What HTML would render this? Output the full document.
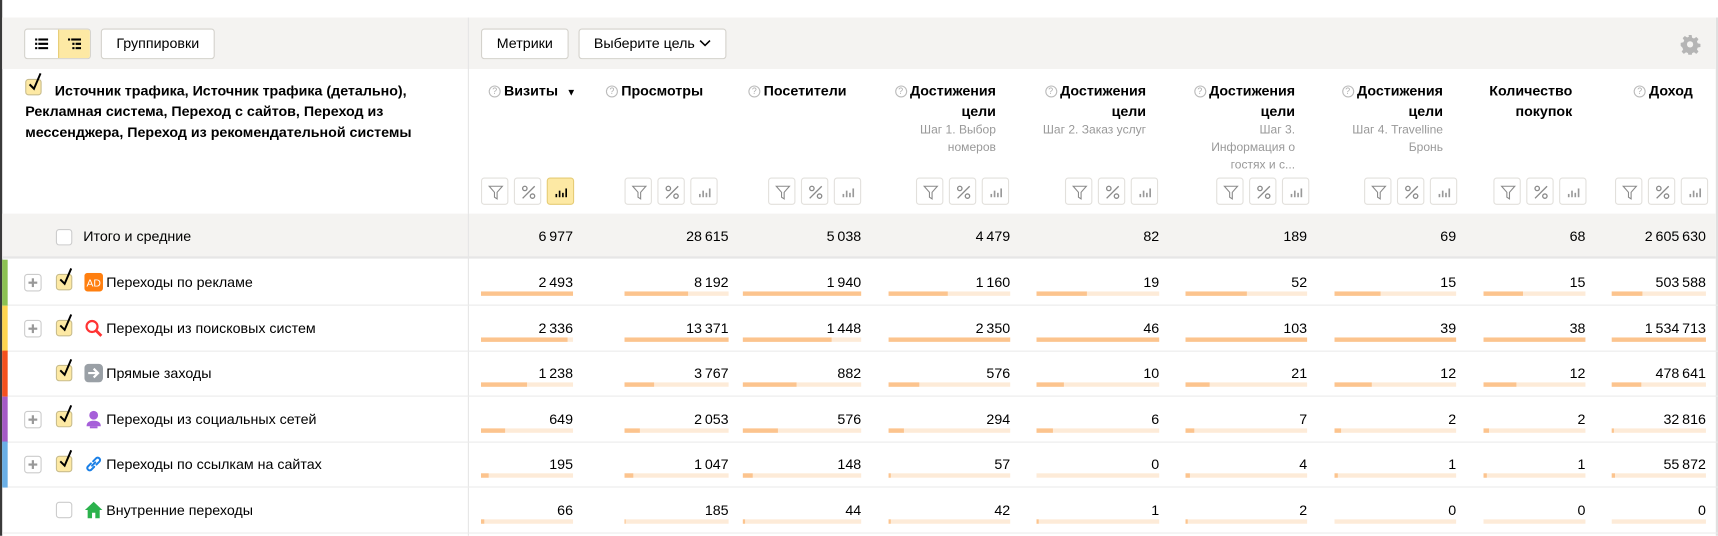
<!DOCTYPE html>
<html><head><meta charset="utf-8"><style>
*{box-sizing:border-box;margin:0;padding:0}
html,body{width:1718px;height:536px;overflow:hidden;background:#fff}
#w{position:absolute;left:0;top:0;width:1568px;height:489px;transform:scale(1.09566);transform-origin:0 0;font-family:"Liberation Sans",sans-serif;color:#000;font-size:13px}
.a{position:absolute}
.btn{position:absolute;top:26px;height:28px;border:1px solid #d4d2cc;border-radius:3px;background:#fff;font-size:13px;line-height:26px;text-align:center}
.hd{position:absolute;top:73px;font-weight:bold;font-size:13px;line-height:19px;text-align:right;white-space:nowrap}
.hd .q{display:inline-block;width:11px;height:11px;border:1px solid #bbb;border-radius:50%;font-size:8px;line-height:9px;color:#aaa;text-align:center;font-weight:normal;vertical-align:1px;margin-right:3px}
.sub{display:block;font-weight:normal;font-size:11px;color:#999;line-height:16px}
.ib{position:absolute;top:162px;width:25px;height:25px;border:1px solid #e2e0dc;border-radius:3px;background:#fff}
.ib svg{position:absolute;left:5px;top:5px}
.ib.on{background:#fde9a4;border-color:#e6cc75}
.row{position:absolute;left:2px;width:1566px;border-bottom:1px solid #ebebeb;height:42px}
.c{position:absolute;top:0;height:41px}
.v{position:absolute;right:0;top:13px;font-size:13px;white-space:nowrap}
.b{position:absolute;left:0;right:0;top:29px;height:4px;background:#fdebd8}
.b i{display:block;height:4px;background:#fcc48e}
.st{position:absolute;left:0;top:0;width:5px;height:42px}
.pl{position:absolute;left:20px;top:13px;width:16px;height:16px;border:1px solid #ccc;border-radius:3px;background:#fff}
.pl:before{content:"";position:absolute;left:3px;top:6px;width:8px;height:2px;background:#999}
.pl:after{content:"";position:absolute;left:6px;top:3px;width:2px;height:8px;background:#999}
.cb{position:absolute;left:49px;top:13px;width:15px;height:15px;border:1px solid #c9bd8d;border-radius:3px;background:#fde9a4}
.cb svg{position:absolute;left:1px;top:-7px}
.cb.off{background:#fff;border-color:#ccc}
.ic{position:absolute;left:75px;top:12px;width:17px;height:17px}
.lb{position:absolute;left:95px;top:13px;font-size:13px;white-space:nowrap}
</style></head><body><div id="w">
<div class="a" style="left:0;top:0;width:2px;height:489px;background:#3a3a3a"></div>
<div class="a" style="left:1566px;top:16px;width:2px;height:473px;background:#e0e0e0"></div>
<div class="a" style="left:2px;top:16px;width:1564px;height:47px;background:#f4f3f1"></div>
<div class="a" style="left:427px;top:16px;width:1px;height:473px;background:#e6e6e6"></div>
<!-- toolbar -->
<div class="btn" style="left:22px;width:61px;overflow:hidden;padding:0">
 <div class="a" style="left:30px;top:0;width:30px;height:26px;background:#fde9a4;border-left:1px solid #e6cc75"></div>
 <svg class="a" style="left:9px;top:8px" width="12" height="10"><rect x="0" y="0" width="2" height="2"/><rect x="3" y="0" width="9" height="2"/><rect x="0" y="4" width="2" height="2"/><rect x="3" y="4" width="9" height="2"/><rect x="0" y="8" width="2" height="2"/><rect x="3" y="8" width="9" height="2"/></svg>
 <svg class="a" style="left:39px;top:8px" width="12" height="10"><rect x="0" y="0" width="2" height="2"/><rect x="3" y="0" width="9" height="2"/><rect x="4" y="4" width="2" height="2"/><rect x="7" y="4" width="5" height="2"/><rect x="4" y="8" width="2" height="2"/><rect x="7" y="8" width="5" height="2"/></svg>
</div>
<div class="btn" style="left:92px;width:104px">Группировки</div>
<div class="btn" style="left:439px;width:80px">Метрики</div>
<div class="btn" style="left:528px;width:135px;text-align:left;padding-left:13px">Выберите цель <svg width="11" height="7" style="vertical-align:1px"><path d="M1 1l4.5 4.5L10 1" fill="none" stroke="#000" stroke-width="1.4"/></svg></div>
<svg class="a" style="left:1533px;top:31px" width="19" height="19" viewBox="0 0 20 20"><path fill="#b5b5b5" d="M8.5 1h3l.5 2.6 1.8.8 2.2-1.5 2.1 2.1-1.5 2.2.8 1.8 2.6.5v3l-2.6.5-.8 1.8 1.5 2.2-2.1 2.1-2.2-1.5-1.8.8-.5 2.6h-3l-.5-2.6-1.8-.8-2.2 1.5-2.1-2.1 1.5-2.2-.8-1.8L1 11.5v-3l2.6-.5.8-1.8-1.5-2.2 2.1-2.1 2.2 1.5 1.8-.8z"/><circle cx="10" cy="10" r="3" fill="#f4f3f1"/></svg>
<!-- left header -->
<div class="a" style="left:23px;top:72px;width:15px;height:15px;border:1px solid #c9bd8d;border-radius:3px;background:#fde9a4"><svg class="a" style="left:1px;top:-7px" width="14" height="18"><path d="M2 11l4 4 6-14" fill="none" stroke="#000" stroke-width="1.8"/></svg></div>
<div class="a" style="left:23px;top:73px;width:400px;font-weight:bold;font-size:13px;line-height:19px;text-indent:27px">Источник трафика, Источник трафика (детально), Рекламная система, Переход с сайтов, Переход из мессенджера, Переход из рекомендательной системы</div>
<!-- headers -->
<div class="hd" style="left:446px"><span class="q">?</span>Визиты <span style="font-size:9px;margin-left:4px">▼</span></div>
<div class="hd" style="left:553px"><span class="q">?</span>Просмотры</div>
<div class="hd" style="left:683px"><span class="q">?</span>Посетители</div>
<div class="hd" style="right:659px"><span class="q">?</span>Достижения<br>цели<span class="sub">Шаг 1. Выбор<br>номеров</span></div>
<div class="hd" style="right:522px"><span class="q">?</span>Достижения<br>цели<span class="sub">Шаг 2. Заказ услуг</span></div>
<div class="hd" style="right:386px"><span class="q">?</span>Достижения<br>цели<span class="sub">Шаг 3.<br>Информация о<br>гостях и с...</span></div>
<div class="hd" style="right:251px"><span class="q">?</span>Достижения<br>цели<span class="sub">Шаг 4. Travelline<br>Бронь</span></div>
<div class="hd" style="right:133px">Количество<br>покупок</div>
<div class="hd" style="right:23px"><span class="q">?</span>Доход</div>
<!-- icon buttons -->
<svg width="0" height="0" style="position:absolute"><defs>
<g id="f"><path d="M1.5 2h12l-4.8 5.5v6l-2.4-1.5v-4.5z" fill="none" stroke="#8a8a8a" stroke-width="1"/></g>
<g id="p"><circle cx="4" cy="4" r="2" fill="none" stroke="#8a8a8a" stroke-width="1.2"/><circle cx="11" cy="11" r="2" fill="none" stroke="#8a8a8a" stroke-width="1.2"/><path d="M2 13L13 2" stroke="#8a8a8a" stroke-width="1.2"/></g>
<g id="c"><rect x="2" y="9" width="1.5" height="3"/><rect x="5" y="6" width="1.5" height="6"/><rect x="8" y="8" width="1.5" height="4"/><rect x="11" y="4" width="1.5" height="8"/></g>
</defs></svg>
<div class="ib" style="left:439px"><svg width="15" height="15"><use href="#f"/></svg></div>
<div class="ib" style="left:469px"><svg width="15" height="15"><use href="#p"/></svg></div>
<div class="ib on" style="left:499px"><svg width="15" height="15" fill="#000"><use href="#c"/></svg></div>
<div class="ib" style="left:570px"><svg width="15" height="15"><use href="#f"/></svg></div><div class="ib" style="left:600px"><svg width="15" height="15"><use href="#p"/></svg></div><div class="ib" style="left:630px"><svg width="15" height="15" fill="#999"><use href="#c"/></svg></div>
<div class="ib" style="left:701px"><svg width="15" height="15"><use href="#f"/></svg></div><div class="ib" style="left:731px"><svg width="15" height="15"><use href="#p"/></svg></div><div class="ib" style="left:761px"><svg width="15" height="15" fill="#999"><use href="#c"/></svg></div>
<div class="ib" style="left:836px"><svg width="15" height="15"><use href="#f"/></svg></div><div class="ib" style="left:866px"><svg width="15" height="15"><use href="#p"/></svg></div><div class="ib" style="left:896px"><svg width="15" height="15" fill="#999"><use href="#c"/></svg></div>
<div class="ib" style="left:972px"><svg width="15" height="15"><use href="#f"/></svg></div><div class="ib" style="left:1002px"><svg width="15" height="15"><use href="#p"/></svg></div><div class="ib" style="left:1032px"><svg width="15" height="15" fill="#999"><use href="#c"/></svg></div>
<div class="ib" style="left:1110px"><svg width="15" height="15"><use href="#f"/></svg></div><div class="ib" style="left:1140px"><svg width="15" height="15"><use href="#p"/></svg></div><div class="ib" style="left:1170px"><svg width="15" height="15" fill="#999"><use href="#c"/></svg></div>
<div class="ib" style="left:1245px"><svg width="15" height="15"><use href="#f"/></svg></div><div class="ib" style="left:1275px"><svg width="15" height="15"><use href="#p"/></svg></div><div class="ib" style="left:1305px"><svg width="15" height="15" fill="#999"><use href="#c"/></svg></div>
<div class="ib" style="left:1363px"><svg width="15" height="15"><use href="#f"/></svg></div><div class="ib" style="left:1393px"><svg width="15" height="15"><use href="#p"/></svg></div><div class="ib" style="left:1423px"><svg width="15" height="15" fill="#999"><use href="#c"/></svg></div>
<div class="ib" style="left:1474px"><svg width="15" height="15"><use href="#f"/></svg></div><div class="ib" style="left:1504px"><svg width="15" height="15"><use href="#p"/></svg></div><div class="ib" style="left:1534px"><svg width="15" height="15" fill="#999"><use href="#c"/></svg></div>
<!-- total -->
<div class="a" style="left:2px;top:195px;width:1564px;height:41px;background:#f4f3f1;border-bottom:2px solid #e6e6e6"></div>
<div class="a" style="left:427px;top:195px;width:1px;height:41px;background:#e6e6e6"></div>
<div class="a" style="left:51px;top:209px;width:15px;height:15px;border:1px solid #ccc;border-radius:3px;background:#fff"></div>
<div class="a" style="left:76px;top:208px">Итого и средние</div>
<div class="a" style="top:208px;left:0;width:1568px">
<span class="a" style="right:1045px">6&#8239;977</span><span class="a" style="right:903px">28&#8239;615</span><span class="a" style="right:782px">5&#8239;038</span><span class="a" style="right:646px">4&#8239;479</span><span class="a" style="right:510px">82</span><span class="a" style="right:375px">189</span><span class="a" style="right:239px">69</span><span class="a" style="right:121px">68</span><span class="a" style="right:11px">2&#8239;605&#8239;630</span></div>

<!-- rows -->
<div class="row" style="top:237px"><div class="st" style="background:#8cc152"></div><div class="pl"></div><div class="cb"><svg width="14" height="18"><path d="M2 11l4 4 6-14" fill="none" stroke="#000" stroke-width="1.8"/></svg></div>
<svg class="ic" viewBox="0 0 17 17"><rect width="17" height="17" rx="3" fill="#ff7f0f"/><text x="8.5" y="12.5" font-size="9.5" fill="#fff" text-anchor="middle" font-family="Liberation Sans">AD</text></svg><div class="lb">Переходы по рекламе</div>
<div class="c" style="left:437px;width:84px"><span class="v">2&#8239;493</span><div class="b"><i style="width:100%"></i></div></div>
<div class="c" style="left:568px;width:95px"><span class="v">8&#8239;192</span><div class="b"><i style="width:61%"></i></div></div>
<div class="c" style="left:676px;width:108px"><span class="v">1&#8239;940</span><div class="b"><i style="width:100%"></i></div></div>
<div class="c" style="left:809px;width:111px"><span class="v">1&#8239;160</span><div class="b"><i style="width:49%"></i></div></div>
<div class="c" style="left:944px;width:112px"><span class="v">19</span><div class="b"><i style="width:41%"></i></div></div>
<div class="c" style="left:1080px;width:111px"><span class="v">52</span><div class="b"><i style="width:50%"></i></div></div>
<div class="c" style="left:1216px;width:111px"><span class="v">15</span><div class="b"><i style="width:38%"></i></div></div>
<div class="c" style="left:1352px;width:93px"><span class="v">15</span><div class="b"><i style="width:39%"></i></div></div>
<div class="c" style="left:1469px;width:86px"><span class="v">503&#8239;588</span><div class="b"><i style="width:33%"></i></div></div>
</div>
<div class="row" style="top:279px"><div class="st" style="background:#ffd54f"></div><div class="pl"></div><div class="cb"><svg width="14" height="18"><path d="M2 11l4 4 6-14" fill="none" stroke="#000" stroke-width="1.8"/></svg></div>
<svg class="ic" viewBox="0 0 17 17"><circle cx="7" cy="7" r="5" fill="none" stroke="#f33" stroke-width="2"/><path d="M10.5 10.5l5 5" stroke="#f33" stroke-width="2.6"/></svg><div class="lb">Переходы из поисковых систем</div>
<div class="c" style="left:437px;width:84px"><span class="v">2&#8239;336</span><div class="b"><i style="width:94%"></i></div></div>
<div class="c" style="left:568px;width:95px"><span class="v">13&#8239;371</span><div class="b"><i style="width:100%"></i></div></div>
<div class="c" style="left:676px;width:108px"><span class="v">1&#8239;448</span><div class="b"><i style="width:75%"></i></div></div>
<div class="c" style="left:809px;width:111px"><span class="v">2&#8239;350</span><div class="b"><i style="width:100%"></i></div></div>
<div class="c" style="left:944px;width:112px"><span class="v">46</span><div class="b"><i style="width:100%"></i></div></div>
<div class="c" style="left:1080px;width:111px"><span class="v">103</span><div class="b"><i style="width:100%"></i></div></div>
<div class="c" style="left:1216px;width:111px"><span class="v">39</span><div class="b"><i style="width:100%"></i></div></div>
<div class="c" style="left:1352px;width:93px"><span class="v">38</span><div class="b"><i style="width:100%"></i></div></div>
<div class="c" style="left:1469px;width:86px"><span class="v">1&#8239;534&#8239;713</span><div class="b"><i style="width:100%"></i></div></div>
</div>
<div class="row" style="top:320px"><div class="st" style="background:#f4511e"></div><div class="cb"><svg width="14" height="18"><path d="M2 11l4 4 6-14" fill="none" stroke="#000" stroke-width="1.8"/></svg></div>
<svg class="ic" viewBox="0 0 17 17"><rect width="17" height="17" rx="4" fill="#9aa0a6"/><path d="M3.5 8.5h9M8.5 4.5l4 4-4 4" fill="none" stroke="#fff" stroke-width="2"/></svg><div class="lb">Прямые заходы</div>
<div class="c" style="left:437px;width:84px"><span class="v">1&#8239;238</span><div class="b"><i style="width:50%"></i></div></div>
<div class="c" style="left:568px;width:95px"><span class="v">3&#8239;767</span><div class="b"><i style="width:28%"></i></div></div>
<div class="c" style="left:676px;width:108px"><span class="v">882</span><div class="b"><i style="width:45%"></i></div></div>
<div class="c" style="left:809px;width:111px"><span class="v">576</span><div class="b"><i style="width:25%"></i></div></div>
<div class="c" style="left:944px;width:112px"><span class="v">10</span><div class="b"><i style="width:22%"></i></div></div>
<div class="c" style="left:1080px;width:111px"><span class="v">21</span><div class="b"><i style="width:20%"></i></div></div>
<div class="c" style="left:1216px;width:111px"><span class="v">12</span><div class="b"><i style="width:31%"></i></div></div>
<div class="c" style="left:1352px;width:93px"><span class="v">12</span><div class="b"><i style="width:32%"></i></div></div>
<div class="c" style="left:1469px;width:86px"><span class="v">478&#8239;641</span><div class="b"><i style="width:31%"></i></div></div>
</div>
<div class="row" style="top:362px"><div class="st" style="background:#a55bc6"></div><div class="pl"></div><div class="cb"><svg width="14" height="18"><path d="M2 11l4 4 6-14" fill="none" stroke="#000" stroke-width="1.8"/></svg></div>
<svg class="ic" viewBox="0 0 17 17"><circle cx="8.5" cy="5" r="4" fill="#a65fd9"/><path d="M2 15c0-4 3-5 6.5-5S15 11 15 15z" fill="#a65fd9"/><rect x="5" y="15" width="7" height="2" fill="#a65fd9"/></svg><div class="lb">Переходы из социальных сетей</div>
<div class="c" style="left:437px;width:84px"><span class="v">649</span><div class="b"><i style="width:26%"></i></div></div>
<div class="c" style="left:568px;width:95px"><span class="v">2&#8239;053</span><div class="b"><i style="width:15%"></i></div></div>
<div class="c" style="left:676px;width:108px"><span class="v">576</span><div class="b"><i style="width:30%"></i></div></div>
<div class="c" style="left:809px;width:111px"><span class="v">294</span><div class="b"><i style="width:13%"></i></div></div>
<div class="c" style="left:944px;width:112px"><span class="v">6</span><div class="b"><i style="width:13%"></i></div></div>
<div class="c" style="left:1080px;width:111px"><span class="v">7</span><div class="b"><i style="width:7%"></i></div></div>
<div class="c" style="left:1216px;width:111px"><span class="v">2</span><div class="b"><i style="width:5%"></i></div></div>
<div class="c" style="left:1352px;width:93px"><span class="v">2</span><div class="b"><i style="width:5%"></i></div></div>
<div class="c" style="left:1469px;width:86px"><span class="v">32&#8239;816</span><div class="b"><i style="width:2%"></i></div></div>
</div>
<div class="row" style="top:403px"><div class="st" style="background:#6aafe6"></div><div class="pl"></div><div class="cb"><svg width="14" height="18"><path d="M2 11l4 4 6-14" fill="none" stroke="#000" stroke-width="1.8"/></svg></div>
<svg class="ic" viewBox="0 0 17 17"><path d="M7 10l3-3M6 8l-3 3a2.2 2.2 0 003 3l3-3M11 9l3-3a2.2 2.2 0 00-3-3L8 6" fill="none" stroke="#1a7fe6" stroke-width="1.8" stroke-linecap="round"/></svg><div class="lb">Переходы по ссылкам на сайтах</div>
<div class="c" style="left:437px;width:84px"><span class="v">195</span><div class="b"><i style="width:8%"></i></div></div>
<div class="c" style="left:568px;width:95px"><span class="v">1&#8239;047</span><div class="b"><i style="width:8%"></i></div></div>
<div class="c" style="left:676px;width:108px"><span class="v">148</span><div class="b"><i style="width:8%"></i></div></div>
<div class="c" style="left:809px;width:111px"><span class="v">57</span><div class="b"><i style="width:2%"></i></div></div>
<div class="c" style="left:944px;width:112px"><span class="v">0</span><div class="b"><i style="width:0%"></i></div></div>
<div class="c" style="left:1080px;width:111px"><span class="v">4</span><div class="b"><i style="width:4%"></i></div></div>
<div class="c" style="left:1216px;width:111px"><span class="v">1</span><div class="b"><i style="width:3%"></i></div></div>
<div class="c" style="left:1352px;width:93px"><span class="v">1</span><div class="b"><i style="width:3%"></i></div></div>
<div class="c" style="left:1469px;width:86px"><span class="v">55&#8239;872</span><div class="b"><i style="width:4%"></i></div></div>
</div>
<div class="row" style="top:445px"><div class="cb off"></div>
<svg class="ic" viewBox="0 0 17 17"><path d="M8.5 1L0.5 8.5h2.5V16h4v-5h3v5h4V8.5h2.5z" fill="#2bb24c"/></svg><div class="lb">Внутренние переходы</div>
<div class="c" style="left:437px;width:84px"><span class="v">66</span><div class="b"><i style="width:3%"></i></div></div>
<div class="c" style="left:568px;width:95px"><span class="v">185</span><div class="b"><i style="width:1%"></i></div></div>
<div class="c" style="left:676px;width:108px"><span class="v">44</span><div class="b"><i style="width:2%"></i></div></div>
<div class="c" style="left:809px;width:111px"><span class="v">42</span><div class="b"><i style="width:2%"></i></div></div>
<div class="c" style="left:944px;width:112px"><span class="v">1</span><div class="b"><i style="width:2%"></i></div></div>
<div class="c" style="left:1080px;width:111px"><span class="v">2</span><div class="b"><i style="width:2%"></i></div></div>
<div class="c" style="left:1216px;width:111px"><span class="v">0</span><div class="b"><i style="width:0%"></i></div></div>
<div class="c" style="left:1352px;width:93px"><span class="v">0</span><div class="b"><i style="width:0%"></i></div></div>
<div class="c" style="left:1469px;width:86px"><span class="v">0</span><div class="b"><i style="width:0%"></i></div></div>
</div>
</div></body></html>
